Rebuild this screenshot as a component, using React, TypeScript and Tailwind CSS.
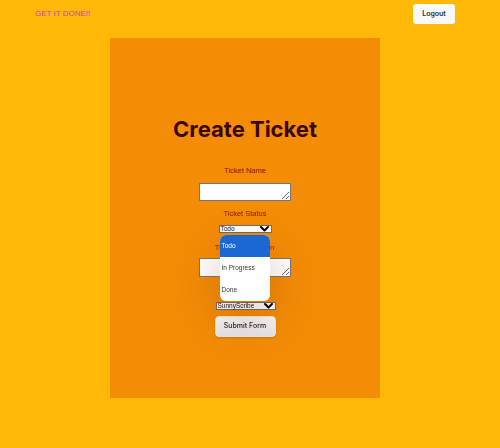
import React from "react";

function Chevron() {
  return (
    <svg width="9" height="6" viewBox="0 0 9 6" className="shrink-0">
      <path d="M1 1 L4.5 4.5 L8 1" fill="none" stroke="#000" strokeWidth="2" strokeLinecap="round" strokeLinejoin="round" />
    </svg>
  );
}

function FakeSelect({ value, w }: { value: string; w: string }) {
  return (
    <div className={`${w} h-[6px] bg-white border border-[#6b6b6b] flex items-center justify-between pl-[1px] pr-[2px] box-content`}>
      <span className="text-[6.5px] leading-[6px] text-[#111]" style={{ fontFamily: '"Liberation Sans", Arial, sans-serif' }}>{value}</span>
      <Chevron />
    </div>
  );
}

export default function App() {
  const sans = { fontFamily: '"Liberation Sans", Arial, sans-serif' };
  return (
    <div className="w-[500px] h-[448px] bg-[#ffb805] overflow-hidden" style={sans}>
      <div className="h-[27px] flex items-center justify-between pl-[35px] pr-[45px]">
        <span className="text-[8px] text-[#c43fc4] leading-none">GET IT DONE!!</span>
        <button className="w-[42px] h-[20px] mt-[1px] rounded-[3px] bg-[#f8f8f8] text-[7px] font-semibold text-[#2e2e33]" style={{ fontFamily: 'Inter, sans-serif' }}>
          Logout
        </button>
      </div>
      <div className="ml-[110px] mt-[11px] w-[270px] h-[360px] bg-[#f48c06] flex flex-col items-center pt-[77px]">
        <h1 className="text-[22px] leading-[28px] font-bold text-[#370617]" style={{ fontFamily: 'Inter, sans-serif' }}>
          Create Ticket
        </h1>
        <label className="mt-[23px] text-[7.5px] leading-[10px] text-[#861805]">Ticket Name</label>
        <textarea className="mt-[7px] w-[92px] h-[18px] bg-white border border-[#767676] ml-[-1px] resize-y" />
        <label className="mt-[8px] text-[7.5px] leading-[10px] text-[#861805]">Ticket Status</label>
        <div className="relative mt-[6px]">
          <FakeSelect value="Todo" w="w-[48px]" />
          <div className="absolute left-[1px] top-[10px] w-[50px] h-[66px] bg-white rounded-[6px] overflow-hidden shadow-[0_18px_45px_rgba(120,40,0,0.28)] z-10 flex flex-col">
            <div className="h-[22px] bg-[#1b67d3] flex items-center pl-[2px] text-[6.5px] text-white">Todo</div>
            <div className="h-[22px] flex items-center pl-[2px] text-[6.5px] text-[#333]">In Progress</div>
            <div className="h-[22px] flex items-center pl-[2px] text-[6.5px] text-[#333]">Done</div>
          </div>
        </div>
        <label className="mt-[10px] text-[7.5px] leading-[10px] text-[#861805] ml-[-1px]">Ticket Description</label>
        <textarea className="mt-[5px] w-[92px] h-[19px] bg-white border border-[#767676] ml-[-1px] resize-y" />
        <label className="mt-[9px] text-[7.5px] leading-[10px] text-[#861805]">Owner</label>
        <div className="mt-[6px] ml-[1px]">
          <FakeSelect value="SunnyScribe" w="w-[55px]" />
        </div>
        <button className="mt-[6px] w-[61px] h-[21px] rounded-[4px] bg-gradient-to-b from-[#fafafa] to-[#e4e4e4] border border-[#e8e8e8] shadow-[0_1px_2px_rgba(0,0,0,0.15)] text-[7px] font-medium text-[#222]" style={{ fontFamily: 'Inter, sans-serif' }}>
          Submit Form
        </button>
      </div>
    </div>
  );
}
